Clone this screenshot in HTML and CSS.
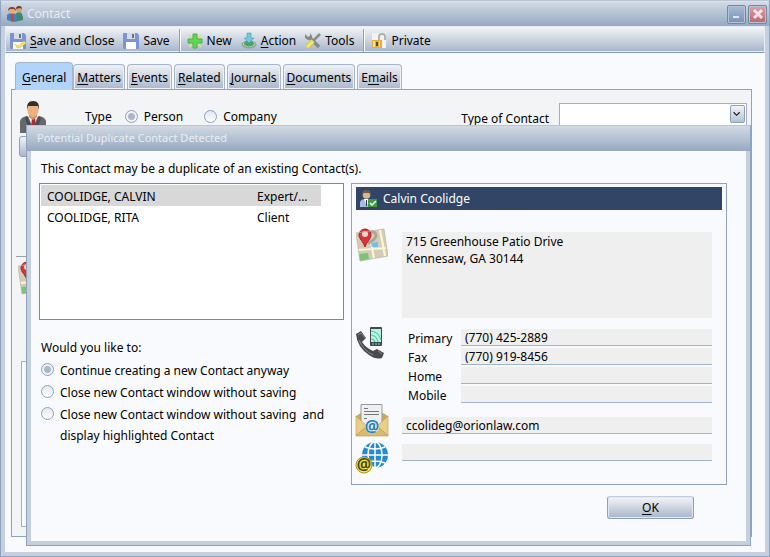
FILE: index.html
```html
<!DOCTYPE html>
<html lang="en">
<head>
    <meta charset="UTF-8">
    <meta name="viewport" content="width=device-width, initial-scale=1.0">
    <title>Contact</title>
    <link rel="stylesheet" href="styles.css">
</head>
<body>

    <!-- Shared map icon -->
    <svg class="defs" width="0" height="0" aria-hidden="true">
        <symbol id="map" viewBox="0 0 32 34">
            <path d="M0 5 L28 1 L32 28 L4 33z" fill="#d3ccb9"/>
            <path d="M2 22 L30 20 M15 13 L18 31 M24 2 L29 28" stroke="#fdf6cf" stroke-width="2.2" fill="none"/>
            <path d="M3 26 L12 25 L13 31 L4 33z" fill="#7cc576"/>
            <path d="M15 15 L22 14 L22 19 L16 19z" fill="#6cc0f5"/>
            <path d="M14 4 Q20 3 20 8 Q19 12 12 15" fill="none" stroke="#aaa596" stroke-width="3"/>
            <path d="M9 19 C7 13 3 11 3 7 A6 6 0 0 1 15 7 C15 11 11 13 9 19z" fill="#dc3436" stroke="#a52226"/>
            <circle cx="9" cy="6" r="3" fill="#e3d9cb"/>
            <path d="M0 5 L28 1 L32 28 L4 33z" fill="none" stroke="#bdb49c" stroke-width=".7"/>
        </symbol>
    </svg>

    <div class="window">
        <header class="titlebar">
            <svg class="title-icon" width="16" height="16" viewBox="0 0 16 16">
                <path d="M7 16 Q7 6 12 6 Q16 6 16 14z" fill="#3d8b62"/>
                <circle cx="12" cy="3.500" r="3" fill="#d6a273"/>
                <path d="M9 3 Q9 0 12 0 Q15 0 15 3 L13 2z" fill="#544738"/>
                <path d="M0 9 Q1 7 5 7 Q9 7 10 10 L10 14 L6 16 L0 14z" fill="#3f83c7"/>
                <path d="M4 7 L6 7 L7 14 L5 16 L4 14z" fill="#d5422e"/>
                <circle cx="5" cy="4.500" r="3.200" fill="#e8aa79"/>
                <path d="M1 5 Q1 1 5 1 Q9 1 9 5 L7 3 L3 3z" fill="#83402b"/>
            </svg>
            <h1>Contact</h1>
            <button class="win-btn minimize" aria-label="Minimize">
                <svg width="12" height="12" viewBox="0 0 12 12"><path d="M2 9h6" stroke="#dfe7f0" stroke-width="2"/></svg>
            </button>
            <button class="win-btn close" aria-label="Close">
                <svg width="12" height="12" viewBox="0 0 12 12"><path d="M2 2l8 8M10 2l-8 8" stroke="#f5e3e6" stroke-width="3"/></svg>
            </button>
        </header>

        <main class="client">
            <nav class="toolbar">
                <button class="tool">
                    <svg width="16" height="16" viewBox="0 0 16 16">
                        <path d="M0 0h14l2 2v14H1l-1-1z" fill="#7b94d6"/>
                        <path d="M4 0h8v6H4z" fill="#d7dbe2"/><path d="M9 1h2v4H9z" fill="#5f7390"/>
                        <path d="M3 9h10v7H3z" fill="#fff"/>
                        <path d="M5 11l3 2 6-5 2 2-6 5H7z" fill="#f3e46c" stroke="#d7c035" stroke-width=".5"/>
                    </svg>
                    <span><u>S</u>ave and Close</span>
                </button>
                <button class="tool">
                    <svg width="16" height="16" viewBox="0 0 16 16">
                        <path d="M0 0h14l2 2v14H1l-1-1z" fill="#7b94d6"/>
                        <path d="M4 0h8v6H4z" fill="#d7dbe2"/><path d="M9 1h2v4H9z" fill="#5f7390"/>
                        <path d="M3 9h10v7H3z" fill="#fff"/>
                    </svg>
                    <span>Save</span>
                </button>
                <span class="divider"></span>
                <button class="tool">
                    <svg width="16" height="16" viewBox="0 0 16 16">
                        <path d="M2 2l12 12M14 2L2 14" stroke="#dfd9a6" stroke-width="2"/>
                        <path d="M6 1h4v5h5v4h-5v5H6v-5H1V6h5z" fill="#62d552" stroke="#49b34a"/>
                    </svg>
                    <span>New</span>
                </button>
                <button class="tool">
                    <svg width="16" height="16" viewBox="0 0 16 16">
                        <ellipse cx="8" cy="11.500" rx="7.500" ry="4" fill="#8fa398"/>
                        <ellipse cx="8" cy="11" rx="6" ry="3" fill="#c4d3c6"/>
                        <ellipse cx="8" cy="10.500" rx="5" ry="3" fill="#43a958"/>
                        <path d="M6 0h4v5h3l-5 5-5-5h3z" fill="#75c7de" stroke="#4b9cb8" stroke-width=".6"/>
                    </svg>
                    <span><u>A</u>ction</span>
                </button>
                <button class="tool">
                    <svg width="16" height="16" viewBox="0 0 16 16">
                        <path d="M4 4l10 10" stroke="#85898c" stroke-width="3.500"/>
                        <path d="M0 1v4l3 2 4-1V3L5 0v3L3 4z" fill="#85898c"/>
                        <path d="M15 1L8 8" stroke="#888d90" stroke-width="2.500"/>
                        <path d="M8 8l-6 6" stroke="#c7b63f" stroke-width="5"/>
                        <path d="M8 8l-6 6" stroke="#f4e66d" stroke-width="3.500"/>
                    </svg>
                    <span>Tools</span>
                </button>
                <span class="divider"></span>
                <button class="tool">
                    <svg width="16" height="16" viewBox="0 0 16 16">
                        <path d="M1 0h14v15H1z" fill="#f2f2f0"/>
                        <path d="M8 7V3q0-2 3-2t3 2v4" fill="none" stroke="#aaaeb0" stroke-width="1.800"/>
                        <path d="M1 7h10v8H1z" fill="#e8ad38"/><path d="M2 8h2v6H2zM8 8h1v6H8z" fill="#fbdf91"/>
                        <path d="M5 9h2v4H5z" fill="#4c4a43"/>
                    </svg>
                    <span>Private</span>
                </button>
            </nav>

            <div class="tabs" role="tablist">
                <button class="tab active" role="tab" aria-selected="true"><u>G</u>eneral</button>
                <button class="tab" role="tab"><u>M</u>atters</button>
                <button class="tab" role="tab"><u>E</u>vents</button>
                <button class="tab" role="tab"><u>R</u>elated</button>
                <button class="tab" role="tab"><u>J</u>ournals</button>
                <button class="tab" role="tab"><u>D</u>ocuments</button>
                <button class="tab" role="tab">E<u>m</u>ails</button>
            </div>

            <section class="page">
                <div class="type-row">
                    <svg class="person" width="26" height="32" viewBox="0 0 26 32">
                        <path d="M0 32V20q1-4 7-5l6 3 6-3q6 1 7 5v12z" fill="#66686b"/>
                        <path d="M8 15h10l-5 12z" fill="#f1f1f3"/>
                        <path d="M12 17h3l1 9-2 4-3-4z" fill="#a72e35"/>
                        <path d="M7 15l6 14 6-14 2 2-5 15h-6L5 17z" fill="#4a4c50"/>
                        <path d="M9 11h8v5l-4 3-4-3z" fill="#d58f60"/>
                        <ellipse cx="13" cy="9" rx="5.500" ry="7" fill="#edb07f"/>
                        <path d="M7 9Q6 0 13 0t6 9l-1-4H8z" fill="#333029"/>
                    </svg>
                    <span class="type-label">Type</span>
                    <label class="choice"><input type="radio" name="type" checked>Person</label>
                    <label class="choice"><input type="radio" name="type">Company</label>
                    <label class="kind-label" for="kind">Type of Contact</label>
                    <span class="combo">
                        <select id="kind"></select>
                        <svg width="15" height="18" viewBox="0 0 15 18"><path d="M3 7l3.500 3.500L10 7" fill="none" stroke="#111" stroke-width="1.300"/></svg>
                    </span>
                </div>
                <button class="side-btn" aria-label="Details"></button>
                <div class="rule"></div>
                <svg class="back-map" width="32" height="34"><use href="#map"/></svg>
                <div class="notes"></div>
            </section>
        </main>
    </div>

    <div class="dialog" role="dialog" aria-labelledby="dialogTitle">
        <h2 id="dialogTitle">Potential Duplicate Contact Detected</h2>
        <div class="dialog-body">
            <p class="message">This Contact may be a duplicate of an existing Contact(s).</p>

            <div class="columns">
                <div class="left">
                    <div class="list">
                        <table>
                            <tr class="selected"><td>COOLIDGE, CALVIN</td><td>Expert/...</td></tr>
                            <tr><td>COOLIDGE, RITA</td><td>Client</td></tr>
                        </table>
                    </div>
                    <fieldset>
                        <legend>Would you like to:</legend>
                        <label class="choice"><input type="radio" name="action" checked>Continue creating a new Contact anyway</label>
                        <label class="choice"><input type="radio" name="action">Close new Contact window without saving</label>
                        <label class="choice"><input type="radio" name="action"><span>Close new Contact window without saving&nbsp; and<br>display highlighted Contact</span></label>
                    </fieldset>
                </div>

                <div class="card">
                    <h3>
                        <svg width="17" height="17" viewBox="0 0 17 17">
                            <path d="M0 17v-5q1-3 6-3t6 3v5z" fill="#a9bddb"/>
                            <path d="M4 9h5l-2 7z" fill="#fff"/><path d="M6 10h1v6H6z" fill="#263652"/>
                            <circle cx="6.500" cy="5" r="3.800" fill="#dbb58d"/>
                            <path d="M2 5q0-5 4.500-5T11 5L9 3H4z" fill="#6d5b49"/>
                            <path d="M8 9h9v8H8z" fill="#3f9b42"/><path d="M10 13l2 2 4-4" fill="none" stroke="#fff" stroke-width="1.500"/>
                        </svg>
                        Calvin Coolidge
                    </h3>

                    <div class="row address">
                        <svg width="32" height="34"><use href="#map"/></svg>
                        <textarea aria-label="Address" readonly>715 Greenhouse Patio Drive
Kennesaw, GA 30144</textarea>
                    </div>

                    <div class="row phones">
                        <svg width="32" height="34" viewBox="0 0 32 34">
                            <path d="M0 7 L5 4 L10 11 L6 15 Q10 21 17 24 L21 22 L28 26 L26 31 Q20 33 13 28 Q1 20 0 7z" fill="#494c4f"/>
                            <path d="M2 8l3-2 4 5M3 13q4 10 14 15M22 24l4 3" fill="none" stroke="#85888b"/>
                            <rect x="14" y="0" width="12" height="19" rx="1" fill="#41494e"/>
                            <rect x="15" y="2" width="10" height="13" fill="#b5f5e3"/>
                            <path d="M15 12q3 0 4 3M15 8q6 1 7 7M15 4q8 1 10 9" fill="none" stroke="#5fc79f" stroke-width="1.200"/>
                            <path d="M16 17h2M19 17h2M22 17h2" stroke="#7fd3c4"/>
                        </svg>
                        <div class="phone-list">
                            <label for="primary">Primary</label><input id="primary" type="text" value="(770) 425-2889" readonly>
                            <label for="fax">Fax</label><input id="fax" type="text" value="(770) 919-8456" readonly>
                            <label for="home">Home</label><input id="home" type="text" readonly>
                            <label for="mobile">Mobile</label><input id="mobile" type="text" readonly>
                        </div>
                    </div>

                    <div class="row email">
                        <svg width="32" height="32" viewBox="0 0 32 32">
                            <path d="M0 12l5-3h22l5 3v20H0z" fill="#caa95b"/>
                            <path d="M5 .5h21v24H5z" fill="#eeeff0" stroke="#999"/>
                            <path d="M8 4.500h4M8 7.500h15M8 10.500h15M8 14.500h3" stroke="#777"/>
                            <path d="M0 12l11 10L0 32zM32 12L21 22l11 10z" fill="#e9cf86" stroke="#b79749" stroke-width=".6"/>
                            <path d="M0 32l11-10h10l11 10z" fill="#d9bc6c" stroke="#b79749" stroke-width=".6"/>
                            <ellipse cx="16" cy="23" rx="7" ry="6" fill="#e9edee"/>
                            <text class="at blue" x="16" y="28">@</text>
                        </svg>
                        <input type="text" aria-label="Email" value="ccolideg@orionlaw.com" readonly>
                    </div>

                    <div class="row web">
                        <svg width="32" height="32" viewBox="0 0 32 32">
                            <circle cx="19" cy="13" r="13" fill="#2689d3"/>
                            <path d="M19 0v26M6 13h26M9 5q10 4 20 0M9 21q10-4 20 0" fill="none" stroke="#fff" stroke-width="1.500"/>
                            <ellipse cx="19" cy="13" rx="7" ry="13" fill="none" stroke="#fff" stroke-width="1.500"/>
                            <circle cx="8" cy="23" r="8" fill="#f0e544" stroke="#a79a29"/>
                            <text class="at dark" x="8" y="28">@</text>
                        </svg>
                        <input type="text" aria-label="Website" readonly>
                    </div>
                </div>
            </div>

            <button class="ok"><u>O</u>K</button>
        </div>
    </div>

</body>
</html>
```
FILE: styles.css
```css
* {
    box-sizing: border-box;
}

body {
    margin: 0;
    height: 100vh;
    position: relative;
    overflow: hidden;
    font-family: "Noto Sans", "Segoe UI", sans-serif;
    font-size: 12px;
    line-height: 18px;
    color: #000;
}

h1, h2, h3, p, fieldset, legend {
    margin: 0;
    padding: 0;
    border: 0;
    font-size: 12px;
    font-weight: normal;
}

button, input, select, textarea {
    font: inherit;
    color: inherit;
    margin: 0;
}

u {
    text-underline-offset: 2px;
}

svg {
    display: block;
    flex-shrink: 0;
    overflow: visible;
}

.defs {
    position: absolute;
}

/* Main window */
.window {
    height: 100%;
    display: flex;
    flex-direction: column;
    padding: 0 4px 4px;
    border: 1px solid #8fa3be;
    border-top-color: #b9c5d4;
    background: #c5cfdd;
}

.titlebar {
    display: flex;
    align-items: center;
    height: 25px;
    margin: 0 -4px;
    padding: 0 2px 0 6px;
    background: linear-gradient(#d2dae4, #96a9c1);
    border-top: 1px solid #dce2ea;
    color: #e8edf3;
}

.titlebar h1 {
    flex: 1;
    padding-left: 4px;
}

.win-btn {
    display: flex;
    align-items: center;
    justify-content: center;
    width: 19px;
    height: 19px;
    margin-left: 2px;
    padding: 0;
    border: 1px solid #7089a9;
    border-radius: 2px;
    box-shadow: inset 0 0 0 1px #b4c3d6;
    background: linear-gradient(#a9bbd0, #7891b3);
}

.close {
    background: linear-gradient(#d9a3aa, #c4626b);
}

.client {
    flex: 1;
    display: flex;
    flex-direction: column;
    padding: 0 13px 15px 6px;
    background: #f9fafd;
}

.toolbar {
    display: flex;
    align-items: center;
    height: 27px;
    margin: 0 -13px 0 -6px;
    padding: 2px 0 0 4px;
    background: linear-gradient(#f2f4f7, #a6b5ca);
    border: 1px solid #e8edf3;
    border-bottom-color: #839ab7;
    box-shadow: inset 0 -1px #e8edf3;
}

.tool {
    display: flex;
    align-items: center;
    gap: 4px;
    margin-right: 9px;
    padding: 0;
    border: 0;
    background: none;
}

.divider {
    width: 2px;
    height: 23px;
    margin-right: 6px;
    background: #8ba1bd;
    border-right: 1px solid #fff;
}

.tabs {
    display: flex;
    align-items: flex-end;
    gap: 2px;
    height: 27px;
    margin-top: 9px;
    padding-left: 4px;
}

.tab {
    height: 25px;
    padding: 2px 3px 0;
    border: 1px solid #a6b5ca;
    border-bottom: 0;
    border-radius: 4px 4px 0 0;
    box-shadow: inset 0 0 0 1px #edf0f4;
    background: linear-gradient(#f0f2f5, #a9b7cc);
}

.tab.active {
    height: 28px;
    margin: 0 -2px -1px 0;
    padding: 2px 6px 0;
    background: #b0d4fa;
    box-shadow: none;
    z-index: 1;
}

.page {
    flex: 1;
    display: flex;
    flex-direction: column;
    align-items: flex-start;
    padding: 8px 4px 9px;
    background: #f3f4f6;
    border: 1px solid #8fa3be;
}

.type-row {
    display: flex;
    align-items: center;
    align-self: stretch;
    height: 38px;
    padding-left: 4px;
}

.type-label {
    margin: 0 13px 0 39px;
}

.type-row .choice {
    margin-right: 21px;
}

.kind-label {
    margin-left: auto;
    margin-right: 10px;
    padding-top: 3px;
}

.combo {
    position: relative;
    width: 188px;
}

.combo select {
    display: block;
    width: 100%;
    height: 28px;
    appearance: none;
    border: 1px solid #9fb0c6;
    background: #fff;
}

/* Arrow button sits over the select */
.combo svg {
    position: absolute;
    top: 2px;
    right: 2px;
    border: 1px solid #8ba1bd;
    border-radius: 2px;
    background: linear-gradient(#f2f4f7, #b4c1d2);
    pointer-events: none;
}

.side-btn {
    width: 60px;
    height: 21px;
    margin-left: 3px;
    border: 1px solid #8ba1bd;
    border-radius: 3px;
    background: linear-gradient(#f2f4f7, #a9b7cc);
}

.rule {
    align-self: stretch;
    margin-top: 99px;
    border-top: 1px solid #a0a0a0;
}

.back-map {
    margin: 4px 0 0 2px;
}

.notes {
    flex: 1;
    align-self: stretch;
    margin: 66px 5px 0;
    border: 1px solid #9fb0c6;
    background: #f9fafd;
}

/* Radio buttons */
.choice {
    display: flex;
    align-items: flex-start;
    gap: 6px;
}

input[type="radio"] {
    flex-shrink: 0;
    appearance: none;
    width: 13px;
    height: 13px;
    margin-top: 2px;
    border: 1px solid #8ba1bd;
    border-radius: 50%;
    background: linear-gradient(#e3e7ed, #fff);
}

input[type="radio"]:checked {
    background: radial-gradient(circle, #a9b7c9 0, #a9b7c9 3px, #f0f3f6 4px);
}

/* Duplicate dialog, over the main window */
.dialog {
    position: absolute;
    top: 125px;
    right: 19px;
    bottom: 11px;
    left: 26px;
    display: flex;
    flex-direction: column;
    padding: 0 4px 4px;
    border: 1px solid #8fa3be;
    border-top-color: #b9c5d4;
    background: #c5cfdd;
    z-index: 2;
}

.dialog h2 {
    height: 25px;
    margin: 0 -4px;
    padding: 3px 10px;
    background: linear-gradient(#d2dae4, #96a9c1);
    color: #e8edf3;
    font-size: 11px;
}

.dialog-body {
    flex: 1;
    display: flex;
    flex-direction: column;
    padding: 9px 19px 0 8px;
    background: #f9fafd;
}

.message {
    margin: 0 2px 5px;
}

.columns {
    display: grid;
    grid-template-columns: 305fr 376fr;
    gap: 7px;
}

.list {
    height: 137px;
    padding: 1px;
    border: 1px solid #838791;
    background: #fff;
}

.list table {
    width: 93%;
    border-collapse: collapse;
    table-layout: fixed;
}

.list td {
    height: 21px;
    padding: 2px 6px 0;
}

.list td:first-child {
    width: 210px;
}

.selected {
    background: #d8d8d8;
}

fieldset {
    display: flex;
    flex-direction: column;
    gap: 1px;
    margin: 19px 2px 0;
    line-height: 21px;
}

legend {
    padding-bottom: 3px;
    line-height: 18px;
}

fieldset input[type="radio"] {
    margin-top: 3px;
}

.card {
    height: 302px;
    padding: 3px 4px;
    border: 1px solid #8fa3be;
}

.card h3 {
    display: flex;
    align-items: center;
    gap: 6px;
    height: 23px;
    padding: 0 4px;
    background: #324567;
    color: #fff;
}

.row {
    display: flex;
    align-items: flex-start;
    gap: 14px;
    padding-right: 10px;
}

.row input,
.row textarea {
    flex: 1;
    min-width: 0;
    height: 17px;
    padding: 2px 4px 0;
    border: 0;
    border-bottom: 1px solid #9fb4cf;
    background: #efefef;
    outline: 0;
}

.row textarea {
    height: 86px;
    margin-top: 4px;
    padding-top: 1px;
    border-bottom: 0;
    resize: none;
    line-height: 17px;
}

.address {
    margin-top: 18px;
}

.phones {
    margin-top: 9px;
}

.phone-list {
    flex: 1;
    display: grid;
    grid-template-columns: 53px 1fr;
    row-gap: 2px;
    padding: 2px 0 0 6px;
}

.phone-list label {
    height: 17px;
    line-height: 20px;
}

.email {
    margin-top: 1px;
}

.email input {
    margin-top: 13px;
}

.web {
    margin-top: 6px;
}

.web input {
    margin-top: 2px;
}

.at {
    font-weight: bold;
    font-size: 16px;
    line-height: 16px;
    text-anchor: middle;
}

.blue {
    fill: #1683c8;
}

.dark {
    fill: #4c4a20;
}

.ok {
    align-self: flex-end;
    width: 87px;
    height: 23px;
    margin: 11px 33px 0 0;
    padding: 0;
    border: 1px solid #8ba1bd;
    border-top-color: #c3cddb;
    border-radius: 3px;
    box-shadow: inset 0 0 0 1px #e3e8ef;
    background: linear-gradient(#f4f5f8, #a6b5ca);
}
```
